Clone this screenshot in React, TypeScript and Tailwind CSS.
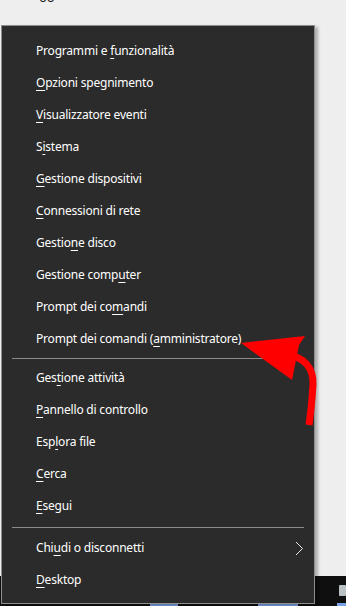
import React from "react";

type Item = { pre: string; key: string; post: string; sub?: boolean };

const group1: Item[] = [
  { pre: "Programmi e ", key: "f", post: "unzionalità" },
  { pre: "", key: "O", post: "pzioni spegnimento" },
  { pre: "", key: "V", post: "isualizzatore eventi" },
  { pre: "S", key: "i", post: "stema" },
  { pre: "", key: "G", post: "estione dispositivi" },
  { pre: "", key: "C", post: "onnessioni di rete" },
  { pre: "Gestio", key: "n", post: "e disco" },
  { pre: "Gestione comp", key: "u", post: "ter" },
  { pre: "Prompt dei co", key: "m", post: "andi" },
  { pre: "Prompt dei comandi (", key: "a", post: "mministratore)" },
];

const group2: Item[] = [
  { pre: "Ges", key: "t", post: "ione attività" },
  { pre: "", key: "P", post: "annello di controllo" },
  { pre: "Esp", key: "l", post: "ora file" },
  { pre: "", key: "C", post: "erca" },
  { pre: "", key: "E", post: "segui" },
];

const group3: Item[] = [
  { pre: "Chi", key: "u", post: "di o disconnetti", sub: true },
  { pre: "", key: "D", post: "esktop" },
];

function Row({ item }: { item: Item }) {
  return (
    <div className="h-[32px] flex items-center pl-[34px] pr-[10px] text-white text-[12px] tracking-[-0.2px] leading-none">
      <span className="whitespace-pre">
        {item.pre}
        <span className="underline underline-offset-[3px] decoration-1">{item.key}</span>
        {item.post}
      </span>
      {item.sub && (
        <svg className="ml-auto" width="9" height="15" viewBox="0 0 9 15">
          <polyline points="1,1 7.5,7.5 1,14" fill="none" stroke="#e8e8e8" strokeWidth="1" />
        </svg>
      )}
    </div>
  );
}

function Sep({ h }: { h: string }) {
  return (
    <div className={`${h} flex items-center px-[10px]`}>
      <div className="h-px w-full bg-[#8a8a8a]" />
    </div>
  );
}

export default function App() {
  return (
    <div
      className="relative w-[346px] h-[606px] overflow-hidden bg-[#eeeeee]"
      style={{ fontFamily: '"Noto Sans", "Open Sans", sans-serif' }}
    >
      {/* partial desktop label at top */}
      <div className="absolute left-[39px] top-[-9px] text-[13px] text-[#1a1a1a] leading-none">oo</div>

      {/* taskbar behind the menu */}
      <div className="absolute inset-x-0 bottom-0 h-[30px] bg-[#0f0f0f] flex items-end">
        <div className="w-[150px]" />
        <div className="h-[3px] w-[28px] bg-[#7aa2e8]" />
        <div className="w-[80px]" />
        <div className="h-[3px] w-[40px] bg-[#7aa2e8]" />
        <div className="w-[14px] self-stretch flex items-start pt-[6px] justify-end">
          <svg width="12" height="12" viewBox="0 0 12 12">
            <circle cx="6" cy="6" r="5" fill="#e66a1f" />
            <circle cx="6" cy="5" r="2.5" fill="#2b57c9" />
            <path d="M2 8 Q6 12 10 7" stroke="#f3b52a" strokeWidth="1.5" fill="none" />
          </svg>
        </div>
        <div className="flex-1 self-stretch flex flex-col items-end">
          <div className="mt-[9px] w-[7px] h-[11px] bg-[#b9c1c4] rounded-[1px]" />
          <div className="mt-auto h-[3px] w-[9px] bg-[#7aa2e8]" />
        </div>
      </div>

      {/* Win+X menu */}
      <div className="relative z-10 ml-[1px] mt-[25px] w-[314px] h-[579px] bg-[#2b2b2b] border border-[#8e8e8e] pt-[9px] shadow-[3px_2px_3px_rgba(0,0,0,0.28)]">
        {group1.map((it, i) => (
          <Row key={"a" + i} item={it} />
        ))}
        <Sep h="h-[7px]" />
        {group2.map((it, i) => (
          <Row key={"b" + i} item={it} />
        ))}
        <Sep h="h-[10px]" />
        {group3.map((it, i) => (
          <Row key={"c" + i} item={it} />
        ))}
      </div>

      {/* red annotation arrow */}
      <svg className="absolute left-0 top-0 z-20 pointer-events-none" width="346" height="606" viewBox="0 0 346 606">
        <path d="M241 343 L305 336 L299 345 L292 380 Z" fill="#ff0000" />
        <path d="M288 355 C 302 357, 314 366, 313 385 C 312 400, 311 412, 309 425" stroke="#ff0000" strokeWidth="7" fill="none" strokeLinecap="butt" />
      </svg>
    </div>
  );
}
